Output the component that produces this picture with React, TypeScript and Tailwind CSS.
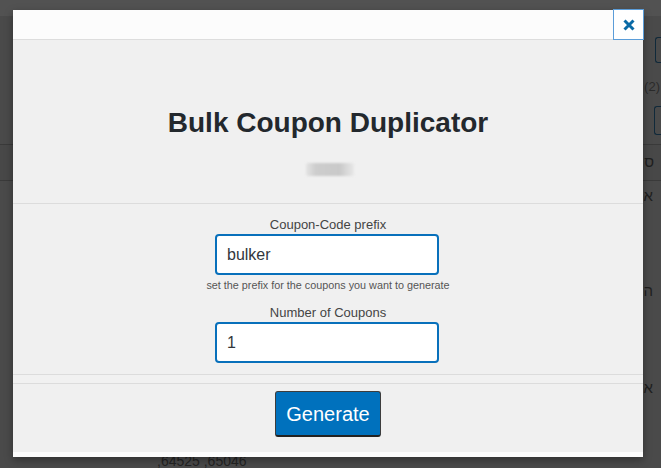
import React from "react";

export default function App() {
  return (
    <div className="relative w-[661px] h-[468px] overflow-hidden bg-[#4a4a4a] font-['Liberation_Sans',Arial,sans-serif]">
      {/* background page (under overlay) */}
      <div className="flex flex-col w-full h-full">
        <div className="h-[16px] bg-[#525252] shrink-0" />
        <div className="h-[128px] shrink-0 flex flex-col items-end">
          <div className="mt-[21px] w-[6px] h-[26px] border-l border-y border-[#10293a] rounded-l-[3px]" />
          <div className="mt-[16px] mr-[1px] text-[13px] leading-[16px] text-[#2a2a2a]">(2)</div>
          <div className="mt-[11px] w-[7px] h-[29px] border-l border-y border-[#10293a] rounded-l-[3px]" />
        </div>
        <div className="h-[37px] shrink-0 border-y border-[#3a3a3a] bg-[#484848] flex justify-end items-center pr-[7px]">
          <span className="text-[15px] text-[#1f1f1f]">ס</span>
        </div>
        <div className="flex-1 flex flex-col items-end pr-[8px] text-[15px] text-[#1f1f1f]">
          <span className="mt-[5px] leading-[20px]">א</span>
          <span className="mt-[75px] leading-[20px]">ה</span>
          <span className="mt-[77px] leading-[20px]">א</span>
        </div>
        <div className="absolute left-[157px] top-[453px] text-[14px] leading-[16px] text-[#232323]">
          ,64525 ,65046
        </div>
      </div>

      {/* modal */}
      <div className="absolute left-[13px] top-[10px] w-[630px] h-[447px] bg-[#fcfcfc] shadow-[0_3px_8px_rgba(0,0,0,0.35)] flex flex-col">
        <div className="h-[30px] shrink-0 border-b border-[#dddddd] bg-[#fcfcfc]" />
        <button className="absolute left-[600px] top-[-1px] w-[31px] h-[31px] bg-white border border-[#5b9dd9] flex items-center justify-center">
          <svg width="12" height="12" viewBox="0 0 12 12">
            <path d="M1.5 1.5 L10.5 10.5 M10.5 1.5 L1.5 10.5" stroke="#0a6aa6" strokeWidth="3" strokeLinecap="butt" />
          </svg>
        </button>

        <div className="flex-1 bg-[#f0f0f0] flex flex-col">
          {/* section 1 */}
          <div className="h-[164px] shrink-0 border-b border-[#dcdcdc] flex flex-col items-center">
            <h1 className="mt-[69px] text-[28px] leading-[28px] font-bold text-[#23282d]">Bulk Coupon Duplicator</h1>
            <div className="mt-[26px] ml-[3px] w-[48px] h-[13px] rounded-[2px] bg-[linear-gradient(90deg,#e4e4e4,#cdcdcd_20%,#c9c9c9_70%,#e8e8e8)] blur-[1px]" />
          </div>

          {/* section 2 */}
          <div className="h-[170px] shrink-0 flex flex-col items-center">
            <label className="mt-[13px] text-[13px] leading-[16px] text-[#444]">Coupon-Code prefix</label>
            <input
              readOnly
              value="bulker"
              className="mt-[1px] mr-[2px] w-[224px] h-[41px] border-2 border-[#0870bb] rounded-[4px] bg-white pl-[10px] text-[16px] text-[#32373c] outline-none"
            />
            <div className="mt-[3px] text-[10.8px] leading-[14px] text-[#555]">set the prefix for the coupons you want to generate</div>
            <label className="mt-[13px] text-[13px] leading-[16px] text-[#444]">Number of Coupons</label>
            <input
              readOnly
              value="1"
              className="mt-[1px] mr-[2px] w-[224px] h-[41px] border-2 border-[#0870bb] rounded-[4px] bg-white pl-[10px] text-[16px] text-[#32373c] outline-none"
            />
          </div>

          <div className="h-[10px] shrink-0 border-y border-[#dcdcdc] bg-[#f1f1f1]" />

          {/* footer */}
          <div className="flex-1 flex justify-center items-start pt-[7px]">
            <button className="w-[106px] h-[46px] rounded-[3px] bg-[#0071bd] border border-[#3d3d3d] border-b-2 border-b-[#222] text-white text-[20px] leading-[24px]">
              Generate
            </button>
          </div>
        </div>
        <div className="h-[5px] shrink-0 bg-[#fcfcfc]" />
      </div>
    </div>
  );
}
